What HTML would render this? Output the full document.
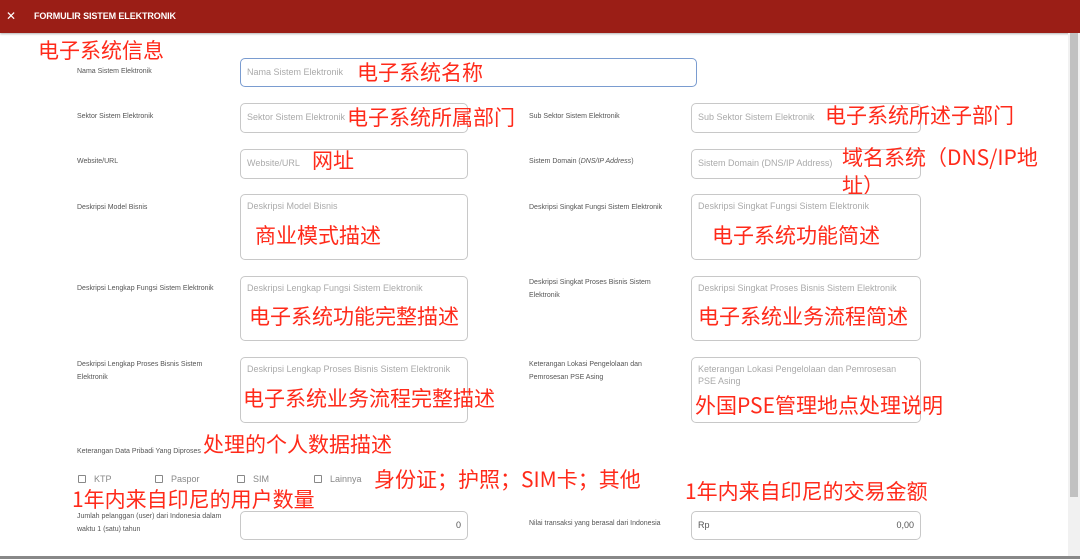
<!DOCTYPE html>
<html><head><meta charset="utf-8"><style>
*{margin:0;padding:0;box-sizing:border-box}
body{width:1080px;height:559px;overflow:hidden;background:#fff;position:relative;font-family:"Liberation Sans","Noto Sans CJK SC",sans-serif}
.hdr{position:absolute;left:0;top:0;width:1080px;height:33px;background:#9b1e16;box-shadow:0 1px 2px rgba(0,0,0,.3)}
.hdr .x{position:absolute;left:6px;top:9px;color:#fff;font-size:12px}
.hdr .t{position:absolute;left:34px;top:11px;color:#fff;font-size:9px;font-weight:bold;letter-spacing:-.1px}
.l{position:absolute;font-size:7px;color:#555;line-height:13px}
.i{position:absolute;border:1px solid #c8c8c8;border-radius:5px;background:#fff;font-size:9px;color:#aaa;padding:0 6px;line-height:27px}
.ta{line-height:12px;padding-top:5px}
.r{position:absolute;color:#ff2a1a;font-size:21px;font-family:"Noto Sans CJK SC",sans-serif;line-height:26px;white-space:nowrap}
.cb{position:absolute;font-size:9px;color:#888}
.cb span{display:inline-block;width:8px;height:8px;border:1px solid #888;border-radius:1px;margin-right:8px;vertical-align:-1px}
.sb{position:absolute;right:0;top:33px;width:12px;height:524px;background:#f1f1f1}
.sb div{position:absolute;left:2px;top:0;width:8px;height:464px;background:#c1c1c1}
.bl{position:absolute;left:0;top:556px;width:1080px;height:3px;background:#888}
</style></head><body>
<div class="hdr"><span class="x">✕</span><span class="t">FORMULIR SISTEM ELEKTRONIK</span></div>
<div class="sb"><div></div></div>
<div class="bl"></div>

<div class="r" style="left:38px;top:37px">电子系统信息</div>

<div class="l" style="left:77px;top:65px">Nama Sistem Elektronik</div>
<div class="i" style="left:240px;top:58px;width:457px;height:29px;border-color:#7a9cd0">Nama Sistem Elektronik</div>
<div class="r" style="left:357px;top:59px">电子系统名称</div>

<div class="l" style="left:77px;top:110px">Sektor Sistem Elektronik</div>
<div class="i" style="left:240px;top:103px;width:228px;height:30px">Sektor Sistem Elektronik</div>
<div class="r" style="left:347px;top:104px">电子系统所属部门</div>

<div class="l" style="left:529px;top:110px">Sub Sektor Sistem Elektronik</div>
<div class="i" style="left:691px;top:103px;width:230px;height:30px">Sub Sektor Sistem Elektronik</div>
<div class="r" style="left:825px;top:102px">电子系统所述子部门</div>

<div class="l" style="left:77px;top:155px">Website/URL</div>
<div class="i" style="left:240px;top:149px;width:228px;height:30px">Website/URL</div>
<div class="r" style="left:312px;top:147px">网址</div>

<div class="l" style="left:529px;top:155px">Sistem Domain (<i>DNS/IP Address</i>)</div>
<div class="i" style="left:691px;top:149px;width:230px;height:30px">Sistem Domain (DNS/IP Address)</div>
<div class="r" style="left:842px;top:143px;line-height:28px">域名系统（DNS/IP地<br>址）</div>

<div class="l" style="left:77px;top:201px">Deskripsi Model Bisnis</div>
<div class="i ta" style="left:240px;top:194px;width:228px;height:66px">Deskripsi Model Bisnis</div>
<div class="r" style="left:255px;top:222px">商业模式描述</div>

<div class="l" style="left:529px;top:201px">Deskripsi Singkat Fungsi Sistem Elektronik</div>
<div class="i ta" style="left:691px;top:194px;width:230px;height:66px">Deskripsi Singkat Fungsi Sistem Elektronik</div>
<div class="r" style="left:712px;top:222px">电子系统功能简述</div>

<div class="l" style="left:77px;top:282px">Deskripsi Lengkap Fungsi Sistem Elektronik</div>
<div class="i ta" style="left:240px;top:276px;width:228px;height:65px">Deskripsi Lengkap Fungsi Sistem Elektronik</div>
<div class="r" style="left:249px;top:303px">电子系统功能完整描述</div>

<div class="l" style="left:529px;top:276px">Deskripsi Singkat Proses Bisnis Sistem<br>Elektronik</div>
<div class="i ta" style="left:691px;top:276px;width:230px;height:65px">Deskripsi Singkat Proses Bisnis Sistem Elektronik</div>
<div class="r" style="left:698px;top:303px">电子系统业务流程简述</div>

<div class="l" style="left:77px;top:358px">Deskripsi Lengkap Proses Bisnis Sistem<br>Elektronik</div>
<div class="i ta" style="left:240px;top:357px;width:228px;height:66px">Deskripsi Lengkap Proses Bisnis Sistem Elektronik</div>
<div class="r" style="left:243px;top:385px">电子系统业务流程完整描述</div>

<div class="l" style="left:529px;top:358px">Keterangan Lokasi Pengelolaan dan<br>Pemrosesan PSE Asing</div>
<div class="i ta" style="left:691px;top:357px;width:230px;height:66px">Keterangan Lokasi Pengelolaan dan Pemrosesan PSE Asing</div>
<div class="r" style="left:695px;top:392px">外国PSE管理地点处理说明</div>

<div class="l" style="left:77px;top:445px">Keterangan Data Pribadi Yang Diproses</div>
<div class="r" style="left:203px;top:431px">处理的个人数据描述</div>

<div class="cb" style="left:78px;top:474px"><span></span>KTP</div>
<div class="cb" style="left:155px;top:474px"><span></span>Paspor</div>
<div class="cb" style="left:237px;top:474px"><span></span>SIM</div>
<div class="cb" style="left:314px;top:474px"><span></span>Lainnya</div>
<div class="r" style="left:374px;top:466px">身份证；护照；SIM卡；其他</div>

<div class="r" style="left:72px;top:486px">1年内来自印尼的用户数量</div>
<div class="r" style="left:685px;top:478px">1年内来自印尼的交易金额</div>

<div class="l" style="left:77px;top:510px">Jumlah pelanggan (user) dari Indonesia dalam<br>waktu 1 (satu) tahun</div>
<div class="i" style="left:240px;top:511px;width:228px;height:29px;color:#555;text-align:right">0</div>

<div class="l" style="left:529px;top:517px">Nilai transaksi yang berasal dari Indonesia</div>
<div class="i" style="left:691px;top:511px;width:230px;height:29px;color:#555"><span>Rp</span><span style="float:right">0,00</span></div>
</body></html>
